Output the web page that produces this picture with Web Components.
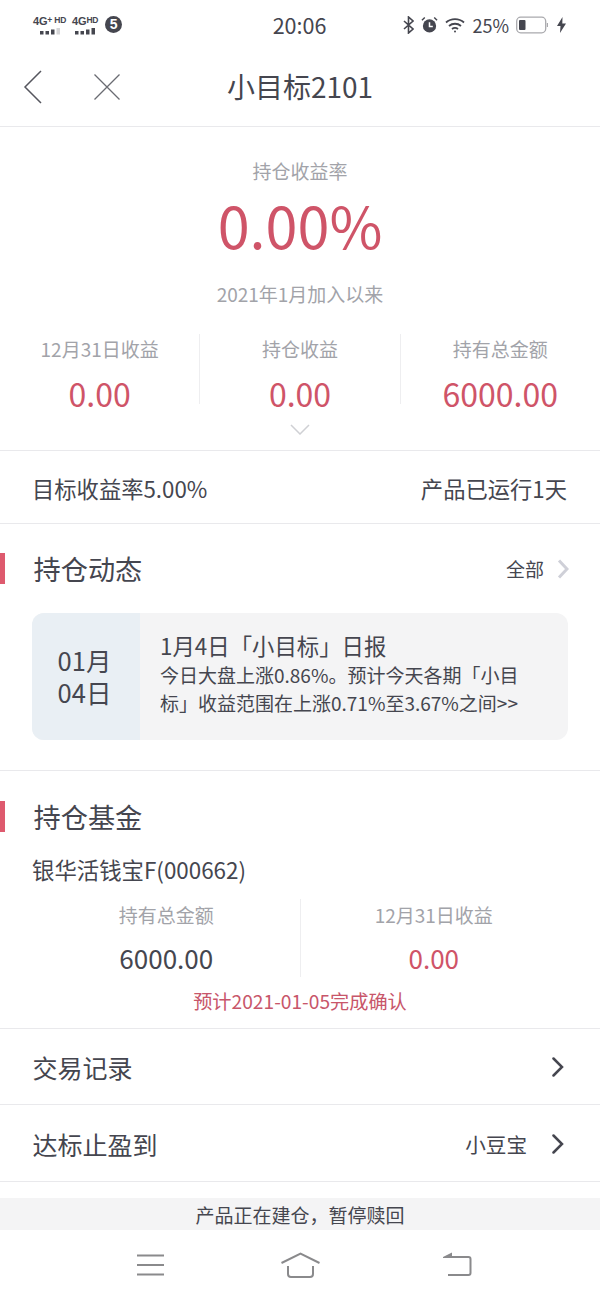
<!DOCTYPE html>
<html lang="zh">
<head>
<meta charset="utf-8">
<style>
    html, body { margin: 0; background: #fff; }
    body {
        width: 600px;
        height: 1300px;
        overflow: hidden;
        display: flex;
        flex-direction: column;
        font-family: "Noto Sans CJK SC", "Noto Sans", sans-serif;
        color: #45464f;
    }
    link-row:first-of-type { height: 76px; }
</style>
</head>
<body>
<status-bar></status-bar>
<nav-bar>小目标2101</nav-bar>
<hero-summary></hero-summary>
<info-row left="目标收益率5.00%" right="产品已运行1天"></info-row>
<holding-news></holding-news>
<holding-fund></holding-fund>
<link-row text="交易记录"></link-row>
<link-row text="达标止盈到" value="小豆宝"></link-row>
<notice-bar>产品正在建仓，暂停赎回</notice-bar>
<system-nav></system-nav>

<script>
// 状态栏
class StatusBar extends HTMLElement {
    constructor() {
        super();
        this.attachShadow({ mode: "open" });
    }
    connectedCallback() {
        const bars = (last) => `
            <svg width="20" height="7" viewBox="0 0 20 7">
                <rect x="0" y="3" width="3.500" height="3.500" fill="#45464f"/>
                <rect x="5.500" y="3" width="3.500" height="3.500" fill="#45464f"/>
                <rect x="11" y="1.500" width="3.500" height="5" fill="#45464f"/>
                <rect x="16.500" y="0" width="3.500" height="6.500" fill="${last}"/>
            </svg>`;
        this.shadowRoot.innerHTML = `
            <style>
                :host { display: block; height: 50px; flex: none; }
                .bar { height: 48px; display: grid; grid-template-columns: 1fr auto 1fr; align-items: center; padding: 0 34px 0 33px; color: #45464f; }
                .left { display: flex; align-items: center; }
                .sim { display: flex; flex-direction: column; align-items: center; gap: 2px; padding-top: 1px; }
                .sim b { font: 700 11px/9px "Liberation Sans", sans-serif; white-space: nowrap; letter-spacing: -0.2px; }
                .sim sup { font-size: 8.500px; line-height: 8px; vertical-align: 2px; }
                .five { width: 17px; height: 17px; margin-left: 7px; border-radius: 50%; background: #45464f; color: #fff; font: 700 14px/17px "Liberation Sans", sans-serif; text-align: center; }
                .time { font-size: 21.500px; line-height: 48px; padding-top: 1px; }
                .right { display: flex; align-items: center; justify-content: flex-end; gap: 7px; font-size: 18px; }
            </style>
            <div class="bar">
                <div class="left">
                    <div class="sim" style="margin-right:6px"><b>4G<sup>+ HD</sup></b>${bars("#d5d5d7")}</div>
                    <div class="sim"><b>4G<sup>HD</sup></b>${bars("#45464f")}</div>
                    <div class="five">5</div>
                </div>
                <div class="time">20:06</div>
                <div class="right">
                    <svg width="11" height="18" viewBox="0 0 11 18" fill="none" stroke="#45464f" stroke-width="1.600"><path d="M1 5l9 8-4.500 4V1l4.500 4-9 8"/></svg>
                    <svg width="17" height="18" viewBox="0 0 18 18"><circle cx="9" cy="10" r="7" fill="#45464f"/><path d="M9 6v4.500h3.500" fill="none" stroke="#fff" stroke-width="1.600"/><path d="M1 4l3-3M17 4l-3-3" stroke="#45464f" stroke-width="1.500"/></svg>
                    <svg width="20" height="16" viewBox="0 0 20 16" fill="none" stroke="#45464f" stroke-width="1.800"><path d="M1 5.500c5-4.500 13-4.500 18 0M4 9c3.500-3 8.500-3 12 0M7 12c1.800-1.400 4.200-1.400 6 0"/><circle cx="10" cy="14.500" r="1" fill="#45464f" stroke="none"/></svg>
                    <span>25%</span>
                    <svg width="32" height="18" viewBox="0 0 32 18"><rect x="0.700" y="1.200" width="29" height="15.600" rx="4" fill="#fff" stroke="#a9a9ad" stroke-width="1.300"/><rect x="3" y="4" width="6.500" height="10" rx="1" fill="#45464f"/><rect x="30.800" y="7" width="1.200" height="4" fill="#a9a9ad"/></svg>
                    <svg width="9" height="16" viewBox="0 0 9 16" style="margin-left:2px"><path d="M5.500 0L0 9h3.500L3 16l6-9.500H5.300z" fill="#45464f"/></svg>
                </div>
            </div>`;
    }
}

// 导航栏
class NavBar extends HTMLElement {
    constructor() {
        super();
        this.attachShadow({ mode: "open" });
        this.shadowRoot.innerHTML = `
            <style>
                :host { display: block; flex: none; height: 77px; border-bottom: 1px solid #e9e9ec; box-sizing: border-box; }
                .bar { height: 76px; display: flex; align-items: center; position: relative; justify-content: center; font-size: 28px; color: #45464f; padding-bottom: 4px; box-sizing: border-box; }
                .icons { position: absolute; left: 23px; top: 20px; display: flex; gap: 50px; align-items: center; }
            </style>
            <div class="bar">
                <div class="icons">
                    <svg width="20" height="34" viewBox="0 0 20 34" fill="none" stroke="#55565e" stroke-width="1.500"><path d="M18 1L2 17l16 16"/></svg>
                    <svg width="28" height="28" viewBox="0 0 28 28" fill="none" stroke="#6a6b72" stroke-width="1.300"><path d="M1.500 1.500l25 25M26.500 1.500l-25 25"/></svg>
                </div>
                <slot></slot>
            </div>`;
    }
}

// 单项收益
class StatCell extends HTMLElement {
    constructor() {
        super();
        this.attachShadow({ mode: "open" });
    }
    connectedCallback() {
        const color = this.getAttribute("color") || "#cf5468";
        this.shadowRoot.innerHTML = `
            <style>
                :host { display: flex; flex-direction: column; align-items: center; flex: 1; }
                :host(:not(:last-child)) { border-right: 1px solid #eeeef0; }
                .label { font-size: 19px; line-height: var(--label-height, 30px); color: #a2a3a9; }
                .value { font-size: var(--value-size, 32px); line-height: 44px; margin-top: var(--value-gap, 7px); color: ${color}; }
            </style>
            <div class="label">${this.getAttribute("label")}</div>
            <div class="value">${this.getAttribute("value")}</div>`;
    }
}

// 顶部收益
class HeroSummary extends HTMLElement {
    constructor() {
        super();
        this.attachShadow({ mode: "open" });
        this.shadowRoot.innerHTML = `
            <style>
                :host { display: block; flex: none; height: 324px; border-bottom: 1px solid #e9e9ec; box-sizing: border-box; text-align: center; }
                .title { font-size: 19px; line-height: 30px; padding-top: 29px; color: #a2a3a9; }
                .rate { font-size: 57.500px; line-height: 70px; margin-top: 3px; color: #cf5468; }
                .since { font-size: 19px; line-height: 30px; margin-top: 20px; color: #a2a3a9; }
                .stats { display: flex; height: 70px; margin-top: 25px; }
                svg { display: block; margin: 20px auto 0; }
            </style>
            <div class="title">持仓收益率</div>
            <div class="rate">0.00%</div>
            <div class="since">2021年1月加入以来</div>
            <div class="stats">
                <stat-cell label="12月31日收益" value="0.00"></stat-cell>
                <stat-cell label="持仓收益" value="0.00"></stat-cell>
                <stat-cell label="持有总金额" value="6000.00"></stat-cell>
            </div>
            <svg width="20" height="11" viewBox="0 0 20 11" fill="none" stroke="#cfd0d4" stroke-width="1.500"><path d="M1 1l9 9 9-9"/></svg>`;
    }
}

// 目标收益率
class InfoRow extends HTMLElement {
    constructor() {
        super();
        this.attachShadow({ mode: "open" });
    }
    connectedCallback() {
        this.shadowRoot.innerHTML = `
            <style>
                :host { display: flex; flex: none; height: 73px; box-sizing: border-box; border-bottom: 1px solid #e9e9ec; justify-content: space-between; align-items: center; padding: 2px 33px 0 32px; font-size: 22.300px; color: #45464f; }
            </style>
            <span>${this.getAttribute("left")}</span>
            <span>${this.getAttribute("right")}</span>`;
    }
}

// 小标题
class SectionHead extends HTMLElement {
    constructor() {
        super();
        this.attachShadow({ mode: "open" });
        this.shadowRoot.innerHTML = `
            <style>
                :host { display: flex; align-items: center; justify-content: space-between; height: 31px; border-left: 5px solid #de5a6e; padding: 0 31px 0 28.500px; font-size: 27.200px; color: #45464f; }
                ::slotted(*) { display: flex; }
                .title { margin-top: -2px; }
            </style>
            <span class="title"><slot name="title"></slot></span>
            <slot name="more"></slot>`;
    }
}

// 持仓动态
class HoldingNews extends HTMLElement {
    constructor() {
        super();
        this.attachShadow({ mode: "open" });
        this.shadowRoot.innerHTML = `
            <style>
                :host { display: block; flex: none; height: 247px; box-sizing: border-box; border-bottom: 1px solid #e9e9ec; padding-top: 29px; }
                .more { display: flex; align-items: center; gap: 13px; font-size: 19px; color: #45464f; }
                .card { display: flex; margin: 29px 32px 0; height: 127px; background: #f4f4f5; border-radius: 12px; overflow: hidden; }
                .date { flex: none; width: 105px; padding: 0 3px 2px 0; background: #e9eff4; display: flex; align-items: center; justify-content: center; font-size: 25.500px; line-height: 32px; white-space: pre-line; }
                .body { padding: 17px 20px 0; }
                h3 { margin: 0; font-size: 22.400px; line-height: 30px; font-weight: 400; }
                p { margin: 1px 0 0; font-size: 19px; line-height: 28px; width: 368px; }
            </style>
            <section-head>
                <span slot="title">持仓动态</span>
                <span slot="more" class="more">全部
                    <svg width="12" height="20" viewBox="0 0 12 20" fill="none" stroke="#cfd0d8" stroke-width="3"><path d="M2 1.500l8 8.500-8 8.500"/></svg>
                </span>
            </section-head>
            <div class="card">
                <div class="date">01月
04日</div>
                <div class="body">
                    <h3>1月4日「小目标」日报</h3>
                    <p>今日大盘上涨0.86%。预计今天各期「小目标」收益范围在上涨0.71%至3.67%之间&gt;&gt;</p>
                </div>
            </div>`;
    }
}

// 持仓基金
class HoldingFund extends HTMLElement {
    constructor() {
        super();
        this.attachShadow({ mode: "open" });
        this.shadowRoot.innerHTML = `
            <style>
                :host { display: block; flex: none; height: 258px; box-sizing: border-box; border-bottom: 1px solid #e9e9ec; padding-top: 30px; --label-height: 32px; --value-size: 26px; --value-gap: 5px; }
                .name { font-size: 22.400px; line-height: 32px; margin: 21px 33px 0 32px; }
                .stats { display: flex; height: 78px; margin-top: 14px; padding: 0 33px; }
                .tip { text-align: center; font-size: 19.200px; line-height: 26px; color: #c8566a; margin-top: 11px; }
            </style>
            <section-head><span slot="title">持仓基金</span></section-head>
            <div class="name">银华活钱宝F(000662)</div>
            <div class="stats">
                <stat-cell label="持有总金额" value="6000.00" color="#45464f"></stat-cell>
                <stat-cell label="12月31日收益" value="0.00"></stat-cell>
            </div>
            <div class="tip">预计2021-01-05完成确认</div>`;
    }
}

// 列表行
class LinkRow extends HTMLElement {
    constructor() {
        super();
        this.attachShadow({ mode: "open" });
    }
    connectedCallback() {
        const value = this.getAttribute("value");
        this.shadowRoot.innerHTML = `
            <style>
                :host { display: flex; flex: none; height: 77px; box-sizing: border-box; border-bottom: 1px solid #e9e9ec; align-items: center; padding: 1px 36px 0 32.500px; font-size: 25px; color: #45464f; }
                .text { flex: 1; }
                .value { font-size: 20.600px; margin-right: 25px; }
            </style>
            <span class="text">${this.getAttribute("text")}</span>
            ${value ? `<span class="value">${value}</span>` : ""}
            <svg width="12" height="20" viewBox="0 0 12 20" fill="none" stroke="#45464f" stroke-width="2.500" stroke-linecap="round"><path d="M1.500 1.500l8.500 8.500-8.500 8.500"/></svg>`;
    }
}

// 底部提示
class NoticeBar extends HTMLElement {
    constructor() {
        super();
        this.attachShadow({ mode: "open" });
        this.shadowRoot.innerHTML = `
            <style>
                :host { display: block; flex: none; margin-top: 16px; height: 32px; background: #f4f4f5; text-align: center; font-size: 19px; line-height: 34px; color: #45464f; overflow: hidden; }
            </style>
            <slot></slot>`;
    }
}

// 系统导航
class SystemNav extends HTMLElement {
    constructor() {
        super();
        this.attachShadow({ mode: "open" });
        this.shadowRoot.innerHTML = `
            <style>
                :host { display: flex; flex: 1; align-items: flex-start; padding: 22px 0 0 137px; box-sizing: border-box; }
                svg { fill: none; stroke: #8a8a8c; stroke-width: 2; }
                .menu { margin-top: 2px; }
                .home { margin: 0 123px 0 117px; }
            </style>
            <svg class="menu" width="27" height="22" viewBox="0 0 27 22"><path d="M0 1.500h27M0 11h27M0 20.500h27"/></svg>
            <svg class="home" width="39" height="26" viewBox="0 0 39 26"><path d="M0.500 11L19.500 1.500 38.500 11M7 14v8a3 3 0 0 0 3 3h19a3 3 0 0 0 3-3v-8"/></svg>
            <svg width="29" height="25" viewBox="0 0 29 25"><path d="M3 5h22.500a2 2 0 0 1 2 2v14a2 2 0 0 1-2 2H5"/><path d="M0 5L9 0.500V6H0z" fill="#8a8a8c" stroke="none"/></svg>`;
    }
}

customElements.define("status-bar", StatusBar);
customElements.define("nav-bar", NavBar);
customElements.define("stat-cell", StatCell);
customElements.define("hero-summary", HeroSummary);
customElements.define("info-row", InfoRow);
customElements.define("section-head", SectionHead);
customElements.define("holding-news", HoldingNews);
customElements.define("holding-fund", HoldingFund);
customElements.define("link-row", LinkRow);
customElements.define("notice-bar", NoticeBar);
customElements.define("system-nav", SystemNav);
</script>
</body>
</html>
